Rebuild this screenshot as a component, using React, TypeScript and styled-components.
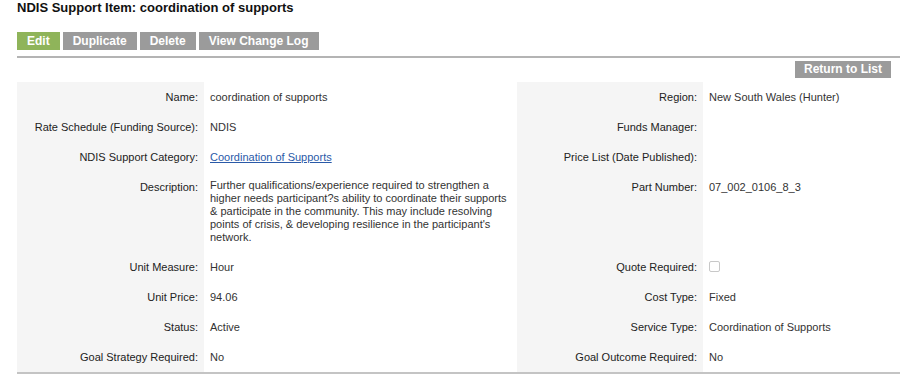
import React from "react";
import styled, { createGlobalStyle } from "styled-components";

const GlobalStyle = createGlobalStyle`
  html, body {
    margin: 0;
    padding: 0;
    background: #fff;
  }
  body {
    font-family: "Liberation Sans", Arial, Helvetica, sans-serif;
    color: #333;
  }
`;

const Page = styled.div`
  padding: 0 0 0 17px;
`;

const Title = styled.h1`
  margin: 0;
  padding-top: 0;
  font-size: 13px;
  line-height: 16px;
  font-weight: bold;
  color: #111;
`;

const Toolbar = styled.div`
  display: flex;
  gap: 3px;
  margin-top: 16px;
  padding-bottom: 6px;
  border-bottom: 2px solid #b4b4b4;
`;

const ActionButton = styled.button<{ $primary?: boolean }>`
  height: 18px;
  padding: 0 10px;
  border: none;
  background: ${(p) => (p.$primary ? "#8fb45a" : "#9b9b9b")};
  color: #fff;
  font-family: "Liberation Sans", Arial, sans-serif;
  font-size: 12px;
  font-weight: bold;
  line-height: 18px;
  cursor: pointer;
`;

const ReturnRow = styled.div`
  display: flex;
  justify-content: flex-end;
  padding-right: 9px;
  margin-top: 3px;
`;

const ReturnButton = styled(ActionButton)`
  height: 17px;
  line-height: 17px;
  padding: 0 9px;
`;

const DetailsGrid = styled.div`
  display: grid;
  grid-template-columns: 187px 313px 186px 1fr;
  margin-top: 4px;
  border-bottom: 2px solid #c4c4c4;
  font-size: 11px;
`;

const Label = styled.div`
  background: #f5f5f5;
  text-align: right;
  padding: 8px 6px;
  line-height: 14px;
  color: #222;
`;

const Value = styled.div<{ $tall?: boolean }>`
  padding: ${(p) => (p.$tall ? "7px 6px 8px" : "8px 6px")};
  line-height: ${(p) => (p.$tall ? "13px" : "14px")};
  color: #333;
`;

const Link = styled.a`
  color: #2a5aa8;
  text-decoration: underline;
`;

const Checkbox = styled.span`
  display: inline-block;
  width: 9px;
  height: 9px;
  border: 1px solid #c8c8c8;
  border-radius: 2px;
  background: #fff;
  vertical-align: -1px;
`;

type Row = {
  left: string;
  leftValue: React.ReactNode;
  right: string;
  rightValue: React.ReactNode;
  tall?: boolean;
};

const rows: Row[] = [
  {
    left: "Name:",
    leftValue: "coordination of supports",
    right: "Region:",
    rightValue: "New South Wales (Hunter)",
  },
  {
    left: "Rate Schedule (Funding Source):",
    leftValue: "NDIS",
    right: "Funds Manager:",
    rightValue: "",
  },
  {
    left: "NDIS Support Category:",
    leftValue: <Link href="#">Coordination of Supports</Link>,
    right: "Price List (Date Published):",
    rightValue: "",
  },
  {
    left: "Description:",
    leftValue:
      "Further qualifications/experience required to strengthen a higher needs participant?s ability to coordinate their supports & participate in the community. This may include resolving points of crisis, & developing resilience in the participant's network.",
    right: "Part Number:",
    rightValue: "07_002_0106_8_3",
    tall: true,
  },
  {
    left: "Unit Measure:",
    leftValue: "Hour",
    right: "Quote Required:",
    rightValue: <Checkbox />,
  },
  {
    left: "Unit Price:",
    leftValue: "94.06",
    right: "Cost Type:",
    rightValue: "Fixed",
  },
  {
    left: "Status:",
    leftValue: "Active",
    right: "Service Type:",
    rightValue: "Coordination of Supports",
  },
  {
    left: "Goal Strategy Required:",
    leftValue: "No",
    right: "Goal Outcome Required:",
    rightValue: "No",
  },
];

export default function App() {
  return (
    <>
      <GlobalStyle />
      <Page>
        <Title>NDIS Support Item: coordination of supports</Title>
        <Toolbar>
          <ActionButton $primary>Edit</ActionButton>
          <ActionButton>Duplicate</ActionButton>
          <ActionButton>Delete</ActionButton>
          <ActionButton>View Change Log</ActionButton>
        </Toolbar>
        <ReturnRow>
          <ReturnButton>Return to List</ReturnButton>
        </ReturnRow>
        <DetailsGrid>
          {rows.map((row, i) => (
            <React.Fragment key={i}>
              <Label>{row.left}</Label>
              <Value $tall={row.tall}>{row.leftValue}</Value>
              <Label>{row.right}</Label>
              <Value>{row.rightValue}</Value>
            </React.Fragment>
          ))}
        </DetailsGrid>
      </Page>
    </>
  );
}
